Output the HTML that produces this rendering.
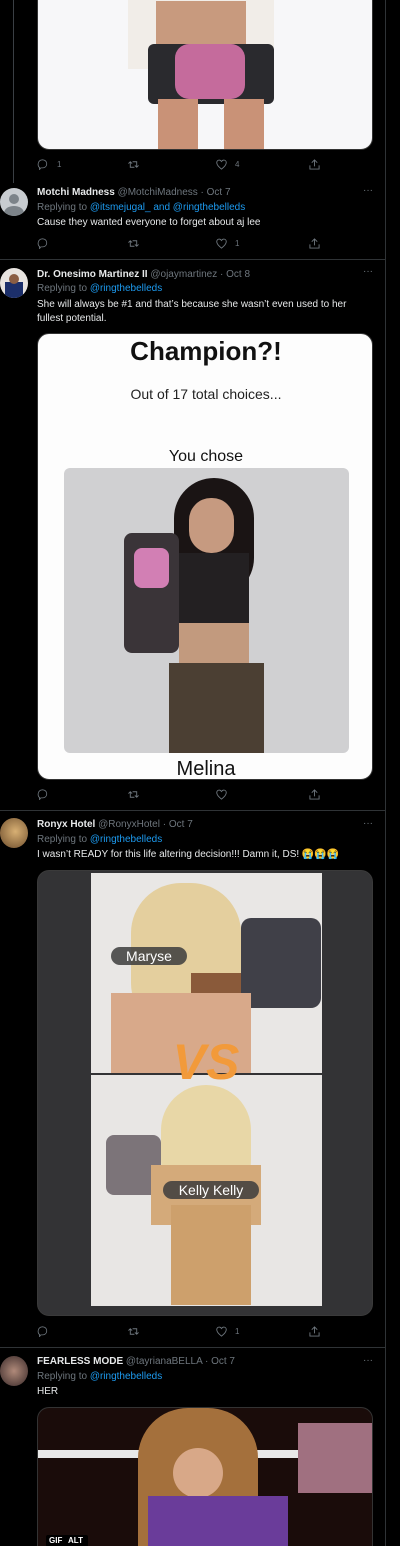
<!DOCTYPE html>
<html style="overflow:hidden;height:1546px"><head><meta charset="utf-8"><style>
*{margin:0;padding:0;box-sizing:border-box}
body{width:400px;height:1546px;background:#000;position:relative;overflow:hidden;font-family:"Liberation Sans","Noto Sans CJK JP",sans-serif;color:#d9d9d9;font-size:10px}
.a{position:absolute}
.name{color:#e7e9ea;font-weight:bold}
.g{color:#6e767d}
.l{color:#1d9bf0}
.t{color:#e7e9ea}
.div{position:absolute;left:0;width:385px;height:1px;background:#2f3336}
.dots{position:absolute;left:363px;color:#6e767d;font-size:10px}
.ic{position:absolute;width:11px;height:11px}
.cnt{position:absolute;color:#6e767d;font-size:8px}
</style></head><body>
<div class="a" style="left:385px;top:0;width:1px;height:1546px;background:#2f3336"></div>
<div class="a" style="left:13px;top:0;width:1px;height:183px;background:#3a3f44"></div>

<div class="a" style="left:37px;top:-12px;width:336px;height:162px;border-radius:12px;background:#f7f7f9;overflow:hidden;border:1px solid #333">
 <div class="a" style="left:90px;top:0;width:146px;height:80px;background:#f1ede8"></div>
 <div class="a" style="left:118px;top:12px;width:90px;height:60px;background:#c89a7e"></div>
 <div class="a" style="left:110px;top:55px;width:126px;height:60px;background:#2a2a2e;border-radius:6px"></div>
 <div class="a" style="left:137px;top:55px;width:70px;height:55px;background:#c56b9c;border-radius:14px"></div>
 <div class="a" style="left:120px;top:110px;width:40px;height:52px;background:#c99277"></div>
 <div class="a" style="left:186px;top:110px;width:40px;height:52px;background:#c99277"></div>
</div>

<div id="rows"></div>

<div class="a" style="left:0;top:188px;width:28px;height:28px;border-radius:50%;background:#c8ccd0;overflow:hidden"><div class="a" style="left:9px;top:6px;width:10px;height:10px;border-radius:50%;background:#7c8389"></div><div class="a" style="left:4px;top:18px;width:20px;height:14px;border-radius:50%;background:#7c8389"></div></div>
<div class="a" style="left:37px;top:187px"><span class="name">Motchi Madness</span> <span class="g">@MotchiMadness · Oct 7</span></div>
<div class="a" style="left:37px;top:202px"><span class="g">Replying to </span><span class="l">@itsmejugal_ and @ringthebelleds</span></div>
<div class="a t" style="left:37px;top:217px">Cause they wanted everyone to forget about aj lee</div>
<div class="dots" style="top:185px">···</div>
<div class="div" style="top:259px"></div>

<div class="a" style="left:0;top:268px;width:28px;height:30px;border-radius:50%;background:#e8e4e0;overflow:hidden"><div class="a" style="left:5px;top:14px;width:18px;height:16px;background:#1c2f6a"></div><div class="a" style="left:9px;top:6px;width:10px;height:10px;border-radius:50%;background:#8a5e44"></div></div>
<div class="a" style="left:37px;top:269px"><span class="name">Dr. Onesimo Martinez II</span> <span class="g">@ojaymartinez · Oct 8</span></div>
<div class="a" style="left:37px;top:283px"><span class="g">Replying to </span><span class="l">@ringthebelleds</span></div>
<div class="a t" style="left:37px;top:298px;width:330px;line-height:14px">She will always be #1 and that’s because she wasn’t even used to her fullest potential.</div>
<div class="dots" style="top:266px">···</div>

<div class="a" style="left:37px;top:333px;width:336px;height:447px;border-radius:12px;background:#fdfdfd;overflow:hidden;border:1px solid #333">
 <div class="a" style="left:0;top:2px;width:336px;text-align:center;color:#111;font-size:26px;font-weight:bold">Champion?!</div>
 <div class="a" style="left:0;top:52px;width:336px;text-align:center;color:#222;font-size:14px">Out of 17 total choices...</div>
 <div class="a" style="left:0;top:114px;width:336px;text-align:center;color:#111;font-size:16px">You chose</div>
 <div class="a" style="left:26px;top:134px;width:285px;height:285px;border-radius:6px;background:#d0d0d2;overflow:hidden">
  <div class="a" style="left:110px;top:10px;width:80px;height:120px;border-radius:40px;background:#1a1414"></div>
  <div class="a" style="left:125px;top:30px;width:45px;height:55px;border-radius:22px;background:#c69a80"></div>
  <div class="a" style="left:115px;top:85px;width:70px;height:70px;background:#232022"></div>
  <div class="a" style="left:60px;top:65px;width:55px;height:120px;background:#3a3438;border-radius:8px"></div>
  <div class="a" style="left:70px;top:80px;width:35px;height:40px;background:#d27fb4;border-radius:8px"></div>
  <div class="a" style="left:115px;top:155px;width:70px;height:40px;background:#c29a7e"></div>
  <div class="a" style="left:105px;top:195px;width:95px;height:90px;background:#4b3f33"></div>
 </div>
 <div class="a" style="left:0;top:424px;width:336px;text-align:center;color:#111;font-size:20px">Melina</div>
</div>
<div class="div" style="top:810px"></div>

<div class="a" style="left:0;top:818px;width:28px;height:30px;border-radius:50%;background:radial-gradient(circle at 55% 45%,#d8b074,#6a4a2a)"></div>
<div class="a" style="left:37px;top:819px"><span class="name">Ronyx Hotel</span> <span class="g">@RonyxHotel · Oct 7</span></div>
<div class="a" style="left:37px;top:834px"><span class="g">Replying to </span><span class="l">@ringthebelleds</span></div>
<div class="a t" style="left:37px;top:849px">I wasn’t READY for this life altering decision!!! Damn it, DS! 😭😭😭</div>
<div class="dots" style="top:818px">···</div>
<div class="a" style="left:37px;top:870px;width:336px;height:446px;border-radius:12px;background:#333335;overflow:hidden;border:1px solid #3a3a3a">
 <div class="a" style="left:53px;top:2px;width:231px;height:200px;background:#e9e7e5;overflow:hidden">
  <div class="a" style="left:40px;top:10px;width:110px;height:150px;border-radius:50px;background:#e4cf9e"></div>
  <div class="a" style="left:100px;top:100px;width:60px;height:60px;background:#8a5a3a"></div>
  <div class="a" style="left:150px;top:45px;width:80px;height:90px;background:#404048;border-radius:10px"></div>
  <div class="a" style="left:20px;top:120px;width:140px;height:80px;background:#d8a98a"></div>
 </div>
 <div class="a" style="left:53px;top:204px;width:231px;height:231px;background:#e8e6e4;overflow:hidden">
  <div class="a" style="left:70px;top:10px;width:90px;height:120px;border-radius:45px;background:#e8d7a7"></div>
  <div class="a" style="left:15px;top:60px;width:55px;height:60px;background:#7c7479;border-radius:8px"></div>
  <div class="a" style="left:60px;top:90px;width:110px;height:60px;background:#d4aa7a"></div>
  <div class="a" style="left:80px;top:130px;width:80px;height:100px;background:#cda06c"></div>
 </div>
 <div class="a" style="left:73px;top:76px;width:76px;height:18px;border-radius:9px;background:rgba(60,60,60,.85);color:#fff;font-size:14px;text-align:center;line-height:18px">Maryse</div>
 <div class="a" style="left:0;top:166px;width:336px;text-align:center;color:#f29a3a;font-size:50px;font-weight:bold;font-style:italic;line-height:50px">VS</div>
 <div class="a" style="left:125px;top:310px;width:96px;height:18px;border-radius:9px;background:rgba(60,60,60,.85);color:#fff;font-size:14px;text-align:center;line-height:18px">Kelly Kelly</div>
</div>
<div class="div" style="top:1347px"></div>

<div class="a" style="left:0;top:1356px;width:28px;height:30px;border-radius:50%;background:radial-gradient(circle at 50% 50%,#b08a7a,#3a2a2a)"></div>
<div class="a" style="left:37px;top:1356px"><span class="name">FEARLESS MODE</span> <span class="g">@tayrianaBELLA · Oct 7</span></div>
<div class="a" style="left:37px;top:1371px"><span class="g">Replying to </span><span class="l">@ringthebelleds</span></div>
<div class="a t" style="left:37px;top:1386px">HER</div>
<div class="dots" style="top:1355px">···</div>
<div class="a" style="left:37px;top:1407px;width:336px;height:139px;border-radius:12px 12px 0 0;background:#1a0c0a;overflow:hidden;border:1px solid #333;border-bottom:none">
 <div class="a" style="left:0;top:42px;width:336px;height:8px;background:#e8e8e8"></div>
 <div class="a" style="left:100px;top:0;width:120px;height:139px;border-radius:50px 50px 0 0;background:#a4703c"></div>
 <div class="a" style="left:135px;top:40px;width:50px;height:50px;border-radius:25px;background:#d8a888"></div>
 <div class="a" style="left:110px;top:88px;width:140px;height:51px;background:#6a3c9a"></div>
 <div class="a" style="left:260px;top:15px;width:76px;height:70px;background:#a07080"></div>
 <div class="a" style="left:8px;top:127px;width:42px;height:12px;background:#000;border-radius:2px"></div>
 <div class="a" style="left:11px;top:128px;color:#fff;font-weight:bold;font-size:8px">GIF</div>
 <div class="a" style="left:30px;top:128px;color:#fff;font-weight:bold;font-size:8px">ALT</div>
</div>

<script>
var rows=[[165,"1","","4"],[244,"","","1"],[795,"","",""],[1332,"","","1"]];
var h="";
var rep='<path d="M4 10.5 L2.5 12.5 V10 C1 9 0.8 7.5 0.8 6 C0.8 3 3 1 6 1 C9 1 11 3 11 5.8 C11 8.5 9 10.5 6.2 10.5 Z" fill="none" stroke="#6e767d" stroke-width="1"/>';
var rt='<path d="M2.5 3 V9 H7 M0.5 5 L2.5 3 L4.5 5 M9.5 9 V3 H5 M7.5 7 L9.5 9 L11.5 7" fill="none" stroke="#6e767d" stroke-width="1"/>';
var lk='<path d="M6 11 C2 8 0.8 6 0.8 4 C0.8 2.3 2 1.2 3.5 1.2 C4.7 1.2 5.5 2 6 2.8 C6.5 2 7.3 1.2 8.5 1.2 C10 1.2 11.2 2.3 11.2 4 C11.2 6 10 8 6 11 Z" fill="none" stroke="#6e767d" stroke-width="1"/>';
var sh='<path d="M6 1 V8 M3 4 L6 1 L9 4 M1 7 V11 H11 V7" fill="none" stroke="#6e767d" stroke-width="1"/>';
rows.forEach(function(r){var y=r[0]-6;
h+='<svg class="ic" viewBox="0 0 12 13" style="left:37px;top:'+y+'px">'+rep+'</svg>';
if(r[1])h+='<div class="cnt" style="left:57px;top:'+(y+1)+'px">'+r[1]+'</div>';
h+='<svg class="ic" viewBox="0 0 12 12" style="left:128px;top:'+y+'px">'+rt+'</svg>';
h+='<svg class="ic" viewBox="0 0 12 12" style="left:216px;top:'+y+'px">'+lk+'</svg>';
if(r[3])h+='<div class="cnt" style="left:235px;top:'+(y+1)+'px">'+r[3]+'</div>';
h+='<svg class="ic" viewBox="0 0 12 12" style="left:309px;top:'+y+'px">'+sh+'</svg>';});
document.getElementById("rows").innerHTML=h;
</script>
</body></html>
